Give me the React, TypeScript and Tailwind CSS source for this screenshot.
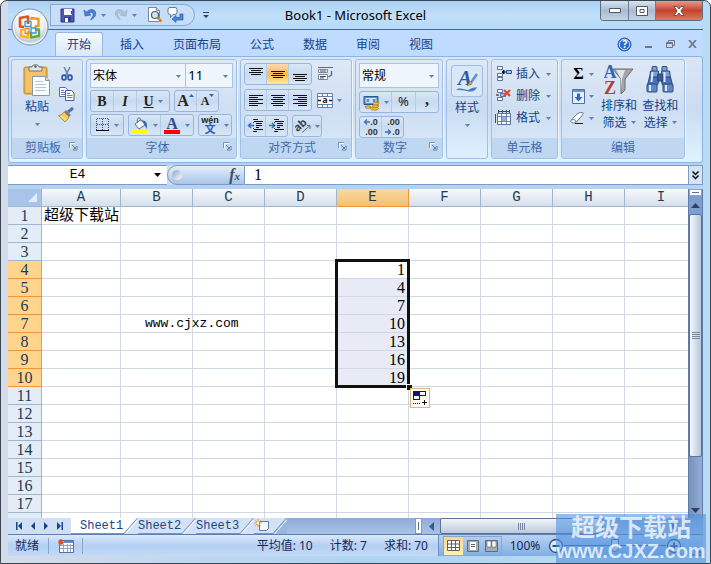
import React, { useState } from "react";
import clsx from "clsx";

const COLUMNS = ["A", "B", "C", "D", "E", "F", "G", "H", "I"];
const ROWS = Array.from({ length: 17 }, (_, i) => i + 1);
const TABS = ["开始", "插入", "页面布局", "公式", "数据", "审阅", "视图"];
const SHEETS = ["Sheet1", "Sheet2", "Sheet3"];

const CELLS: Record<string, string> = {
  A1: "超级下载站",
  B7: "www.cjxz.com",
  E4: "1",
  E5: "4",
  E6: "7",
  E7: "10",
  E8: "13",
  E9: "16",
  E10: "19",
};

const isSelectedRow = (row: number) => row >= 4 && row <= 10;

/* ---------- small shared pieces ---------- */

const Arrow = ({ className = "text-[#5a82b9]" }: { className?: string }) => (
  <svg width="5" height="3" viewBox="0 0 5 3" className={clsx("shrink-0", className)}>
    <path d="M0 0h5L2.5 3z" fill="currentColor" />
  </svg>
);

interface ToolProps {
  label: string;
  arrow?: boolean;
  className?: string;
  children: React.ReactNode;
}

const Tool = ({ label, arrow, className, children }: ToolProps) => (
  <button
    type="button"
    aria-label={label}
    className={clsx("flex items-center justify-center gap-1", className)}
  >
    {children}
    {arrow && <Arrow />}
  </button>
);

const ToolSet = ({ children }: { children: React.ReactNode }) => (
  <div className="flex h-[22px] divide-x divide-[#b4cbe8] overflow-hidden rounded-[3px] border border-[#98b6dd] bg-linear-to-b from-[#d9e6f6] via-[#c9dbf1] to-[#d8e6f7]">
    {children}
  </div>
);

const Launcher = ({ label }: { label: string }) => (
  <button type="button" aria-label={label} className="absolute top-1 right-1">
    <svg width="9" height="9" viewBox="0 0 9 9" fill="none">
      <path d="M.5 6V.5H6" stroke="#7693bb" />
      <path d="M1.5 6.5V1.5H6" stroke="#fff" />
      <path d="M3 3l4 4M8 4v4H4z" stroke="#5d7fae" fill="#fff" />
    </svg>
  </button>
);

interface GroupProps {
  title: string;
  launcher?: boolean;
  className: string;
  children: React.ReactNode;
}

const Group = ({ title, launcher, className, children }: GroupProps) => (
  <section
    aria-label={title}
    className={clsx(
      "flex shrink-0 flex-col overflow-hidden rounded-[3px] border border-[#9fbfe6] bg-linear-to-b from-[#dfe9f6] via-[#cfdff3] to-[#d9e8f8] shadow-[1px_1px_0_#eef6ff]",
      className
    )}
  >
    <div className="min-h-0 flex-1 px-[3px] pt-[3px]">{children}</div>
    <div className="relative h-5 shrink-0 bg-[#c0d7f2] text-center leading-5 text-[#3e6aaa]">
      <span className={clsx(launcher && "pr-2")}>{title}</span>
      {launcher && <Launcher label={`${title}选项`} />}
    </div>
  </section>
);

const Lines = ({ widths, top = 2 }: { widths: number[][]; top?: number }) => (
  <svg width="14" height="14" viewBox="0 0 14 14" shapeRendering="crispEdges">
    {widths.map(([x, w], i) => (
      <rect key={i} x={x} y={top + i * 2} width={w} height="1" fill="#111" />
    ))}
  </svg>
);

/* ---------- icons ---------- */

const OfficeLogo = () => (
  <svg width="38" height="38" viewBox="0 0 38 38">
    <defs>
      <radialGradient id="orb" cx="50%" cy="35%" r="65%">
        <stop offset="0" stopColor="#ffffff" />
        <stop offset="0.6" stopColor="#edf0f5" />
        <stop offset="0.85" stopColor="#c0cad9" />
        <stop offset="1" stopColor="#f5f8fc" />
      </radialGradient>
    </defs>
    <circle cx="19" cy="19" r="18" fill="url(#orb)" stroke="#7e91ac" />
    <circle cx="19" cy="19" r="16.5" fill="none" stroke="#fff" opacity=".8" />
    <g fill="none" strokeLinejoin="round">
      <path d="M17 16V8.500l-8 1.500v8.500l4 .5" stroke="#e4501a" strokeWidth="2.600" />
      <path d="M20.500 12V10l7 1v7l-4 .5" stroke="#f39a1c" strokeWidth="2.400" />
      <path d="M13 21.500l-3 .5v6l7 1.500V23" stroke="#fbb42a" strokeWidth="2.600" />
      <path d="M24 21.500h4v6.500l-8 1.500V24" stroke="#62ab35" strokeWidth="2.400" />
      <path d="M14 13.500h6v5h-6zM20 20h5v5h-5z" stroke="#3f92d2" strokeWidth="1.300" />
      <path d="M14 20.500h4v5h-4z" stroke="#ef8a1d" strokeWidth="1.300" />
    </g>
  </svg>
);

const SaveIcon = () => (
  <svg width="15" height="15" viewBox="0 0 15 15">
    <path d="M1 1h13v13H1z" fill="#5055bd" stroke="#323786" />
    <path d="M4 1h8v6H4z" fill="#f7f8ff" />
    <path d="M11 3h1v3h-1zM4 9h7v5H4z" fill="#363b86" />
    <path d="M5 10h3v4H5z" fill="#fff" />
  </svg>
);

const UndoIcon = ({ redo }: { redo?: boolean }) => (
  <svg width="14" height="14" viewBox="0 0 14 14" className={clsx(redo && "-scale-x-100")}>
    <path
      d="M1 2l1 6 6-1-2-1.500C8 3.500 11 4.500 10 7.500c-.4 1.700-1.500 3-2.500 4.500 4-2 6-5 5-8C11 .5 6.500.8 3.500 4z"
      fill={redo ? "#b3c2d6" : "#4d7fd0"}
      stroke={redo ? "#9aadc7" : "#2c5cae"}
      strokeWidth=".6"
    />
  </svg>
);

const PreviewIcon = () => (
  <svg width="16" height="16" viewBox="0 0 16 16">
    <path d="M1.500.5h8l3 3v11h-11z" fill="#fff" stroke="#7487a4" />
    <path d="M9.500.5v3h3" fill="#cfdbea" stroke="#7487a4" />
    <circle cx="8" cy="8" r="3.500" fill="#cfe5f5" stroke="#4c5c70" strokeWidth="1.200" />
    <path d="M10.500 10.500l4 4" stroke="#d58a21" strokeWidth="2.500" />
  </svg>
);

const ConvertIcon = () => (
  <svg width="17" height="16" viewBox="0 0 17 16">
    <path d="M3 .5h5q2 0 2 2v3q0 2-2 2H6l-2.500 3v-3H3q-2 0-2-2v-3q0-2 2-2z" fill="#fff" stroke="#61789b" />
    <path d="M5 12l4-3.500v2h4V7h3v6H9v2.500z" fill="#4f86d8" stroke="#295cab" strokeWidth=".7" />
  </svg>
);

const HelpIcon = () => (
  <svg width="15" height="15" viewBox="0 0 15 15">
    <circle cx="7.500" cy="7.500" r="6.500" fill="#2d6cd0" stroke="#2a57a5" />
    <circle cx="7.500" cy="7.500" r="5.200" fill="none" stroke="#d7e8ff" />
    <text x="8" y="11" textAnchor="middle" fontSize="10" fontWeight="bold" fill="#fff">?</text>
  </svg>
);

const PasteIcon = () => (
  <svg width="28" height="32" viewBox="0 0 28 32">
    <rect x="1" y="3" width="23" height="27" rx="1.500" fill="#efb651" stroke="#b98534" />
    <path d="M3 5h19v23H3z" fill="#f5c468" />
    <path d="M6 3h3c0-3 7-3 7 0h3v4H6z" fill="#dfe3ea" stroke="#6b7482" />
    <circle cx="12.500" cy="2.500" r="1.200" fill="#555f6e" />
    <path d="M9.500 12.500h13l4 4v15h-17z" fill="#fdfeff" stroke="#8696b1" />
    <path d="M22.500 12.500v4h4" fill="#d5e0ef" stroke="#8696b1" />
    <path d="M12 17.500h8M12 20.500h11M12 23.500h11M12 26.500h11" stroke="#b4c4dd" />
  </svg>
);

const CutIcon = () => (
  <svg width="12" height="14" viewBox="0 0 12 14" fill="none">
    <path d="M3 0l4.500 9M9 0L4.500 9" stroke="#6782a8" strokeWidth="1.500" />
    <ellipse cx="3" cy="10.500" rx="2" ry="2.400" stroke="#2456a8" strokeWidth="1.600" />
    <ellipse cx="9" cy="10.500" rx="2" ry="2.400" stroke="#2456a8" strokeWidth="1.600" />
  </svg>
);

const CopyIcon = () => (
  <svg width="16" height="14" viewBox="0 0 16 14" fill="#fff">
    <path d="M.5.5h6l2 2v7h-8z" stroke="#4c6ea8" />
    <path d="M2 3.500h3M2 5.500h5M2 7.500h5" stroke="#5e86c6" />
    <path d="M6.500 3.500h6l2.500 2.500v7.500H6.500z" stroke="#3c60a0" />
    <path d="M8 6.500h3M8 8.500h5.500M8 10.500h5.500" stroke="#5e86c6" />
  </svg>
);

const BrushIcon = () => (
  <svg width="17" height="16" viewBox="0 0 17 16">
    <path d="M15 1l-5 4" stroke="#5b6da6" strokeWidth="3" />
    <path d="M8 3l5 5-2 2-5-5z" fill="#7c7a9b" />
    <path d="M6 5l5 5c-1 2-3 4-4 5L.5 8.500C3 8 5 7 6 5z" fill="#f2cc63" stroke="#a98124" strokeWidth=".8" />
    <path d="M3 9l5 4" stroke="#fff2b0" />
  </svg>
);

const BorderIcon = () => (
  <svg width="14" height="14" viewBox="0 0 14 14" fill="none" shapeRendering="crispEdges">
    <path d="M.5.5h12v12M.5.5v12M6.500.5v12M.5 6.500h12" stroke="#394e73" strokeDasharray="1 1" />
    <path d="M0 12.500h13" stroke="#000" strokeWidth="1" />
  </svg>
);

const FillIcon = () => (
  <svg width="17" height="17" viewBox="0 0 17 17">
    <path d="M3 7l6-4.500 4 5.500-6 4z" fill="#f7fbff" stroke="#5a6e8b" />
    <path d="M5.500 6c-1.500-6 3.500-7 3.500-1.500" fill="none" stroke="#5a6e8b" />
    <path d="M10 3.500c4-.5 6 3 4.500 8.500-1-3-2-3.500-2-5z" fill="#3569b6" />
    <path d="M0 13h16v4H0z" fill="#ff0" />
  </svg>
);

const FontColorIcon = () => (
  <svg width="17" height="17" viewBox="0 0 17 17" className="font-['Liberation_Serif',serif]">
    <text x="8" y="12" textAnchor="middle" fontSize="16" fontWeight="bold" fill="#2c4c8e">A</text>
    <path d="M0 13h16v4H0z" fill="#f00" />
  </svg>
);

const PhoneticIcon = () => (
  <svg width="19" height="20" viewBox="0 0 19 20" className="font-['Liberation_Sans','Noto_Sans_CJK_SC',sans-serif]">
    <text x="9" y="8" textAnchor="middle" fontSize="9" fontWeight="bold" fill="#222">wén</text>
    <text x="9" y="18" textAnchor="middle" fontSize="11" fontWeight="bold" fill="#2f5cc0">文</text>
  </svg>
);

const WrapIcon = () => (
  <svg width="17" height="16" viewBox="0 0 17 16" fill="none">
    <path d="M1 1.500h15" stroke="#9a5b3a" />
    <path d="M1.500 3.500h9v3h-9zM1.500 8.500h9v5h-9z" fill="#fff" stroke="#7b8899" />
    <path d="M3 5h6M3 10.500h6M3 12h4" stroke="#3b4657" />
    <path d="M14.500 5v4l-3 2" stroke="#3c6ab4" strokeWidth="1.300" />
  </svg>
);

const MergeIcon = () => (
  <svg width="16" height="15" viewBox="0 0 16 15" fill="none">
    <path d="M.5.5h15v14H.5zM.5 3.500h15M.5 11.500h15M5.500.5v3M10.500.5v3M5.500 11.500v3M10.500 11.500v3" fill="#fff" stroke="#6480aa" />
    <path d="M1 7.500h3M12 7.500h3" stroke="#222" strokeWidth="1.500" />
    <text x="8" y="10" textAnchor="middle" fontSize="9" fontWeight="bold" fill="#222">a</text>
  </svg>
);

const IndentIcon = ({ right }: { right?: boolean }) => (
  <svg width="17" height="15" viewBox="0 0 17 15" fill="none">
    <path d="M7 .5h4M7 2.500h9M9 4.500h6M9 6.500h6M9 8.500h3M7 10.500h9M7 12.500h3" stroke="#111" shapeRendering="crispEdges" />
    <path d={right ? "M1 6.500h5M4 4l2.500 2.500L4 9" : "M7 6.500H2M4 4L1.500 6.500 4 9"} stroke="#3d70c4" strokeWidth="1.500" />
    <path d="M6.500 0v14" stroke="#333" strokeDasharray="1 2" />
  </svg>
);

const OrientIcon = () => (
  <svg width="16" height="15" viewBox="0 0 16 15" fill="none">
    <text x="2" y="12" fontSize="11" fontWeight="bold" fill="#39424e" transform="rotate(-42 4 12)">ab</text>
    <path d="M7 13.500l8-7M15 10V6.500h-3" stroke="#566d8f" />
  </svg>
);

const CurrencyIcon = () => (
  <svg width="17" height="17" viewBox="0 0 17 17">
    <path d="M1 2.500h14v8H1z" fill="#5e8ed0" stroke="#2c559c" />
    <path d="M3 4.500h10v4H3z" fill="none" stroke="#cfe2ff" />
    <circle cx="8" cy="6.500" r="2" fill="#cfe2ff" />
    <g fill="#f2be2c" stroke="#a67413" strokeWidth=".7">
      <ellipse cx="11.500" cy="14.500" rx="4" ry="1.700" />
      <ellipse cx="12.500" cy="12" rx="3" ry="1.500" />
      <ellipse cx="13" cy="9.500" rx="3" ry="1.500" />
      <ellipse cx="5" cy="13" rx="3" ry="1.300" />
    </g>
  </svg>
);

const DecimalIcon = ({ less }: { less?: boolean }) => (
  <span className="flex flex-col font-['Liberation_Sans',sans-serif] text-[9px] leading-[10px] font-bold text-[#333]">
    <span className="flex items-center justify-end">
      {!less && <svg width="7" height="6" viewBox="0 0 7 6"><path d="M7 3H2M4 .5L1.500 3 4 5.500" fill="none" stroke="#3d70c4" strokeWidth="1.300" /></svg>}
      {less ? ".00" : ".0"}
    </span>
    <span className="flex items-center justify-end">
      {less && <svg width="7" height="6" viewBox="0 0 7 6"><path d="M0 3h5M3 .5L5.500 3 3 5.500" fill="none" stroke="#3d70c4" strokeWidth="1.300" /></svg>}
      {less ? ".0" : ".00"}
    </span>
  </span>
);

const StyleIcon = () => (
  <svg width="26" height="28" viewBox="0 0 26 28" className="font-['Liberation_Serif',serif]">
    <text x="11" y="18" textAnchor="middle" fontSize="21" fontWeight="bold" fontStyle="italic" fill="#2d59a5">A</text>
    <path d="M23 7l-7 10" stroke="#6290cf" strokeWidth="2.500" />
    <path d="M17 14l-4 5 5-2z" fill="#eab13e" stroke="#a87617" strokeWidth=".6" />
    <path d="M2 23c5-4 10 2 14-1 3-2 5-1 7-2-2 5-6 5-10 4-4-1-8-1-11-1z" fill="#477bc6" />
  </svg>
);

const InsertIcon = () => (
  <svg width="18" height="16" viewBox="0 0 18 16" fill="#fff" stroke="#5673a1">
    <path d="M2.500.5h5v3h-5zM2.500 7.500h5v3h-5zM2.500 11.500h5v3h-5z" />
    <path d="M11.500 4.500h5v3h-5z" fill="#9fc1ec" stroke="#31568e" />
    <path d="M11 6H7M9 4L7 6l2 2z" fill="#111" stroke="#111" />
  </svg>
);

const DeleteIcon = () => (
  <svg width="18" height="16" viewBox="0 0 18 16" fill="#fff" stroke="#5673a1">
    <path d="M2.500 1.500h5v3h-5zM2.500 9.500h5v3h-5z" />
    <path d="M5.500 5.500h5v3h-5z" fill="#9fc1ec" />
    <path d="M4 7H1" stroke="#111" />
    <path d="M9 2l6 6M15 2L9 8" stroke="#e8442c" strokeWidth="2.200" />
  </svg>
);

const FormatIcon = () => (
  <svg width="18" height="16" viewBox="0 0 18 16" fill="none">
    <path d="M2.500 3.500h13v11h-13z" fill="#fff" stroke="#5673a1" />
    <path d="M2.500 6.500h13M2.500 11.500h13M6.500 3.500v11M11.500 3.500v11" stroke="#6885b4" />
    <path d="M7 7h4v4H7z" fill="#8ab0ea" />
    <path d="M3 1.500h12M3.500 0v3M7.500 0v3M11.500 0v3M14.500 0v3M.5 4v9" stroke="#3c4c66" />
  </svg>
);

const SigmaIcon = () => (
  <span className="w-[14px] text-center font-['Liberation_Serif',serif] text-[16px] leading-4 font-bold text-black">Σ</span>
);

const FillDownIcon = () => (
  <svg width="13" height="15" viewBox="0 0 13 15">
    <path d="M.5.5h12v14H.5z" fill="#e5f0ff" stroke="#4d6fa9" />
    <path d="M1 1h11v2H1z" fill="#7094ca" />
    <path d="M5 4.500h3V8h2.500l-4 4.500L2.500 8H5z" fill="#3267c8" />
  </svg>
);

const EraserIcon = () => (
  <svg width="15" height="13" viewBox="0 0 15 13">
    <path d="M1 8.500L7 2c1-1 3-1.500 5-1.500 1.500 0 1.500 1.500.5 2.500L6 10.500C5 11.500-.5 11 1 8.500z" fill="#fff" stroke="#62738d" />
    <path d="M1.500 8c2.500-1 4.500 0 4.500 2" fill="none" stroke="#62738d" />
    <path d="M5 11.500h8" stroke="#222" />
  </svg>
);

const SortIcon = () => (
  <svg width="30" height="32" viewBox="0 0 30 32" className="font-['Liberation_Serif',serif]">
    <text x="6" y="14" textAnchor="middle" fontSize="18" fontWeight="bold" fill="#3664b4">A</text>
    <text x="6" y="30" textAnchor="middle" fontSize="18" fontWeight="bold" fill="#b43d38">Z</text>
    <path d="M9 5h20l-8 10v11l-4 4V15z" fill="#a5a5a8" stroke="#6d6d70" />
    <path d="M12 6h9l-3 9v12l-1-12z" fill="#e5e5e7" />
  </svg>
);

const FindIcon = () => (
  <svg width="28" height="30" viewBox="0 0 28 30">
    <g stroke="#29487f" fill="#7b9fd2">
      <rect x="6" y="1.500" width="5" height="5" rx="1" />
      <rect x="16" y="1.500" width="5" height="5" rx="1" />
      <path d="M4.500 6h8v7h-9zM15.500 6h8l1 7h-9z" />
      <path d="M3.500 12h9v5l-1 3h-10zM15.500 12h9l2 8h-10l-1-3z" fill="#4b72b2" />
      <rect x="1" y="19" width="10" height="8" rx="1" fill="#5f88c5" />
      <rect x="17" y="19" width="10" height="8" rx="1" fill="#5f88c5" />
      <path d="M11.500 9h5v7h-5z" fill="#365b98" />
    </g>
    <path d="M4 20v6M20 20v6M6.500 7l-1 10M18.500 7v10" stroke="#dce9fb" strokeWidth="2" />
  </svg>
);

const MacroIcon = () => (
  <svg width="16" height="14" viewBox="0 0 16 14">
    <path d="M1.500 1.500h14v12h-14z" fill="#fff" stroke="#56719e" />
    <path d="M6 2h9v2H6z" fill="#5c8ad2" />
    <path d="M2 6.500h13M2 9.500h13M5.500 5v8M9.500 5v8M12.500 5v8" stroke="#8ba4cb" />
    <circle cx="3" cy="3" r="2.700" fill="#d9502f" />
  </svg>
);

const NewSheetIcon = () => (
  <svg width="17" height="13" viewBox="0 0 17 13">
    <path d="M5.500 2.500h9v7l-2 2h-7z" fill="#f5f9ff" stroke="#5d78a4" />
    <path d="M4 0v8M0 4h8M1.500 1.500l5 5M6.500 1.500l-5 5" stroke="#e39a2d" />
    <circle cx="4" cy="4" r="1.300" fill="#fff6c9" />
  </svg>
);

/* ---------- window chrome ---------- */

const TitleBar = () => (
  <header className="relative flex h-7 shrink-0 items-center bg-linear-to-b from-[#a9d0f3] via-[#c0dff9] to-[#b7daf8]">
    <div className="ml-[42px] flex h-[22px] items-center rounded-r-full border border-[#8ca9ce] bg-[#c6defa] pr-[10px] pl-[9px]">
      <Tool label="保存"><SaveIcon /></Tool>
      <Tool label="撤消" arrow className="ml-2"><UndoIcon /></Tool>
      <Tool label="恢复" arrow className="ml-2"><UndoIcon redo /></Tool>
      <Tool label="打印预览" className="ml-[10px]"><PreviewIcon /></Tool>
      <Tool label="简繁转换" className="ml-1"><ConvertIcon /></Tool>
    </div>
    <button type="button" aria-label="自定义快速访问工具栏" className="ml-2">
      <svg width="6" height="7" viewBox="0 0 6 7" fill="#24457c"><path d="M0 0h6v1H0zM0 3h6L3 6z" /></svg>
    </button>
    <h1 className="absolute left-1/2 -translate-x-1/2 pt-px text-[13px] whitespace-nowrap text-black">
      Book1 - Microsoft Excel
    </h1>
    <div className="ml-auto flex h-5 self-start overflow-hidden rounded-b-[4px] border border-t-0 border-[#5c6c82]">
      <button type="button" aria-label="最小化" className="grid w-7 place-items-center border-r border-[#6c7d94] bg-linear-to-b from-[#d8e4ef] via-[#a9bccf] to-[#c2d4e6]">
        <svg width="12" height="5" viewBox="0 0 12 5"><path d="M.5.5h11v4H.5z" fill="#fff" stroke="#4e5965" /></svg>
      </button>
      <button type="button" aria-label="最大化" className="grid w-[27px] place-items-center border-r border-[#6c7d94] bg-linear-to-b from-[#d8e4ef] via-[#a9bccf] to-[#c2d4e6]">
        <svg width="12" height="10" viewBox="0 0 12 10"><path d="M.5.5h11v9H.5zM4 3.500h4v3H4z" fill="#fff" stroke="#4e5965" /></svg>
      </button>
      <button type="button" aria-label="关闭" className="grid w-[46px] place-items-center bg-linear-to-b from-[#e39b8b] via-[#c5412b] to-[#d97a60]">
        <svg width="12" height="10" viewBox="0 0 12 10"><path d="M1 .5h3l2 2.500L8 .5h3L7.800 5 11 9.500H8L6 7 4 9.500H1L4.200 5z" fill="#fff" stroke="#5a3a3a" strokeWidth=".8" /></svg>
      </button>
    </div>
    <button type="button" aria-label="Office 按钮" className="absolute top-[7px] left-[3px] z-10">
      <OfficeLogo />
    </button>
  </header>
);

const TabStrip = () => {
  const [active, setActive] = useState("开始");

  return (
    <nav className="flex h-[27px] shrink-0 items-end border-t border-[#48688f] bg-[#bfdbff] pr-1 pl-[47px] text-[#15428b]">
      <div role="tablist" className="flex h-6 gap-[5px]">
        {TABS.map((tab) => (
          <button
            key={tab}
            type="button"
            role="tab"
            aria-selected={tab === active}
            onClick={() => setActive(tab)}
            className={clsx(
              "rounded-t-[3px] border border-b-0 px-[11px]",
              tab === active ? "border-[#96b7e2] bg-linear-to-b from-[#f3f9ff] to-[#dce8f7]" : "border-transparent"
            )}
          >
            {tab}
          </button>
        ))}
      </div>
      <div className="ml-auto flex h-6 items-center gap-[13px] pr-[2px] text-[#707783]">
        <Tool label="帮助"><HelpIcon /></Tool>
        <Tool label="最小化工作簿"><svg width="8" height="8" viewBox="0 0 8 8"><path d="M0 6h7v2H0z" fill="currentColor" /></svg></Tool>
        <Tool label="还原工作簿"><svg width="9" height="8" viewBox="0 0 9 8" fill="none" stroke="currentColor"><path d="M2.500 2V.5h6v5H7M.5 2.500h6v5h-6zM.5 3.500h6" /></svg></Tool>
        <Tool label="关闭工作簿"><svg width="9" height="8" viewBox="0 0 9 8"><path d="M1 0l7 8M8 0L1 8" stroke="currentColor" strokeWidth="1.800" /></svg></Tool>
      </div>
    </nav>
  );
};

/* ---------- ribbon ---------- */

interface ComboProps {
  label: string;
  options: string[];
  className: string;
}

const Combo = ({ label, options, className }: ComboProps) => (
  <div className={clsx("relative h-[25px] border border-[#a9c3e6] bg-[#eef5fd]", className)}>
    <select aria-label={label} className="size-full appearance-none pl-[2px] text-black outline-none">
      {options.map((option) => (
        <option key={option}>{option}</option>
      ))}
    </select>
    <span className="pointer-events-none absolute top-[11px] right-1"><Arrow /></span>
  </div>
);

const BigButton = ({ icon, lines, className }: { icon: React.ReactNode; lines: string[]; className?: string }) => (
  <button type="button" className={clsx("flex flex-col items-center text-[#15428b]", className)}>
    <span className="grid h-[34px] place-items-center">{icon}</span>
    {lines.map((line, i) => (
      <span key={line} className="flex items-center gap-1 leading-[17px]">
        {line}
        {i === 1 && <Arrow />}
      </span>
    ))}
    {lines.length === 1 && <span className="grid h-[17px] place-items-center"><Arrow /></span>}
  </button>
);

const CellCommand = ({ icon, label }: { icon: React.ReactNode; label: string }) => (
  <button type="button" className="flex h-[22px] items-center text-[#15428b]">
    <span className="shrink-0">{icon}</span>
    <span className="mr-[6px] ml-[3px] whitespace-nowrap">{label}</span>
    <Arrow />
  </button>
);

const Ribbon = () => (
  <div className="flex h-[107px] shrink-0 gap-[3px] overflow-hidden rounded-[3px] border border-[#8db2e3] bg-linear-to-b from-[#dbe6f4] via-[#cbdcf2] to-[#dff3ff] px-[2px] pt-[2px] pb-[3px]">
    <Group title="剪贴板" launcher className="w-[72px]">
      <div className="flex justify-between pr-1 pl-2">
        <BigButton icon={<PasteIcon />} lines={["粘贴"]} className="gap-px" />
        <div className="flex flex-col items-center gap-[6px] pt-1">
          <Tool label="剪切"><CutIcon /></Tool>
          <Tool label="复制"><CopyIcon /></Tool>
          <Tool label="格式刷"><BrushIcon /></Tool>
        </div>
      </div>
    </Group>

    <Group title="字体" launcher className="w-[151px]">
      <div className="flex flex-col gap-[2px]">
        <div className="flex">
          <Combo label="字体" options={["宋体", "黑体"]} className="w-[97px]" />
          <Combo label="字号" options={["11", "12"]} className="w-[47px] border-l-0 text-[13px]" />
        </div>
        <div className="flex gap-1 font-['Liberation_Serif',serif] text-[14px] text-[#222]">
          <ToolSet>
            <Tool label="加粗" className="w-[23px] font-bold">B</Tool>
            <Tool label="倾斜" className="w-[23px] font-bold italic">I</Tool>
            <Tool label="下划线" arrow className="w-8 font-bold"><span className="underline">U</span></Tool>
          </ToolSet>
          <ToolSet>
            <Tool label="增大字号" className="w-[22px]"><span className="-mr-1 text-[16px] font-bold">A</span><svg width="5" height="3" viewBox="0 0 5 3" className="mb-3"><path d="M0 3h5L2.500 0z" fill="#3566b4" /></svg></Tool>
            <Tool label="减小字号" className="w-[21px]"><span className="-mr-1 text-[12px] font-bold">A</span><span className="mb-3"><Arrow className="text-[#3566b4]" /></span></Tool>
          </ToolSet>
        </div>
        <div className="flex gap-1">
          <ToolSet><Tool label="边框" arrow className="w-8"><BorderIcon /></Tool></ToolSet>
          <ToolSet>
            <Tool label="填充颜色" arrow className="w-8"><FillIcon /></Tool>
            <Tool label="字体颜色" arrow className="w-8"><FontColorIcon /></Tool>
          </ToolSet>
          <ToolSet><Tool label="拼音" arrow className="w-8"><PhoneticIcon /></Tool></ToolSet>
        </div>
      </div>
    </Group>

    <Group title="对齐方式" launcher className="w-[112px]">
      <div className="flex flex-col gap-1">
        <div className="flex gap-[5px]">
          <ToolSet>
            <Tool label="顶端对齐" className="w-[22px]"><Lines top={1} widths={[[0, 14], [2, 10], [0, 14], [2, 10]]} /></Tool>
            <Tool label="垂直居中" className="w-[22px] bg-linear-to-b from-[#fbdcae] via-[#ffb64e] to-[#ffe99a]"><Lines top={4} widths={[[0, 14], [2, 10], [0, 14], [2, 10]]} /></Tool>
            <Tool label="底端对齐" className="w-[22px]"><Lines top={7} widths={[[0, 14], [2, 10], [0, 14], [2, 10]]} /></Tool>
          </ToolSet>
          <Tool label="自动换行"><WrapIcon /></Tool>
        </div>
        <div className="flex gap-[5px]">
          <ToolSet>
            <Tool label="文本左对齐" className="w-[22px]"><Lines widths={[[0, 14], [0, 9], [0, 14], [0, 9], [0, 14], [0, 9]]} /></Tool>
            <Tool label="居中" className="w-[22px]"><Lines widths={[[0, 14], [2, 10], [0, 14], [2, 10], [0, 14], [2, 10]]} /></Tool>
            <Tool label="文本右对齐" className="w-[22px]"><Lines widths={[[0, 14], [5, 9], [0, 14], [5, 9], [0, 14], [5, 9]]} /></Tool>
          </ToolSet>
          <Tool label="合并后居中" arrow><MergeIcon /></Tool>
        </div>
        <div className="flex gap-1">
          <ToolSet>
            <Tool label="减少缩进量" className="w-[21px]"><IndentIcon /></Tool>
            <Tool label="增加缩进量" className="w-[21px]"><IndentIcon right /></Tool>
          </ToolSet>
          <ToolSet><Tool label="方向" arrow className="w-7"><OrientIcon /></Tool></ToolSet>
        </div>
      </div>
    </Group>

    <Group title="数字" launcher className="w-[88px]">
      <div className="flex flex-col items-start gap-[3px]">
        <Combo label="数字格式" options={["常规", "数值"]} className="w-20" />
        <ToolSet>
          <Tool label="会计数字格式" arrow className="w-8"><CurrencyIcon /></Tool>
          <Tool label="百分比样式" className="w-6 text-[13px] text-[#222]">%</Tool>
          <Tool label="千位分隔样式" className="w-[22px] pb-1 font-['Liberation_Serif',serif] text-[16px] leading-4 font-bold text-[#222]">,</Tool>
        </ToolSet>
        <ToolSet>
          <Tool label="增加小数位数" className="w-[22px]"><DecimalIcon /></Tool>
          <Tool label="减少小数位数" className="w-[21px]"><DecimalIcon less /></Tool>
        </ToolSet>
      </div>
    </Group>

    <section aria-label="样式" className="flex w-[42px] shrink-0 justify-center rounded-[3px] border border-[#9fbfe6] bg-linear-to-b from-[#dfe9f6] via-[#cadcf2] to-[#dff0fd] pt-1">
      <BigButton
        icon={<span className="grid size-8 place-items-center rounded-[3px] border border-[#9fbce2] bg-[#d9e7f8]"><StyleIcon /></span>}
        lines={["样式"]}
        className="gap-px"
      />
    </section>

    <Group title="单元格" className="w-[67px]">
      <div className="flex flex-col">
        <CellCommand icon={<InsertIcon />} label="插入" />
        <CellCommand icon={<DeleteIcon />} label="删除" />
        <CellCommand icon={<FormatIcon />} label="格式" />
      </div>
    </Group>

    <Group title="编辑" className="w-[124px]">
      <div className="flex">
        <div className="flex w-[34px] flex-col items-end pr-1">
          <Tool label="求和" arrow className="h-[22px]"><SigmaIcon /></Tool>
          <Tool label="填充" arrow className="h-[22px]"><FillDownIcon /></Tool>
          <Tool label="清除" arrow className="h-[22px]"><EraserIcon /></Tool>
        </div>
        <BigButton icon={<SortIcon />} lines={["排序和", "筛选"]} className="w-[42px]" />
        <BigButton icon={<FindIcon />} lines={["查找和", "选择"]} className="w-[42px]" />
      </div>
    </Group>
  </div>
);

/* ---------- formula bar and grid ---------- */

const FormulaBar = () => (
  <div className="flex h-[26px] shrink-0 border-t-2 border-b-4 border-[#b6d2f3] bg-[#c7dcf6]">
    <div className="flex w-[159px] items-center border-y border-[#7e9cc2] bg-white">
      <input
        aria-label="名称框"
        defaultValue="E4"
        className="w-[139px] text-center font-['Liberation_Mono',monospace] text-[13px] outline-none"
      />
      <button type="button" aria-label="名称列表" className="ml-[7px]">
        <svg width="7" height="4" viewBox="0 0 7 4"><path d="M0 0h7L3.500 4z" /></svg>
      </button>
    </div>
    <div className="flex w-[78px] items-center justify-between rounded-l-full border border-[#7e9cc2] bg-linear-to-b from-[#e5effb] to-[#a9c4e7] pr-1 pl-1">
      <span className="size-[10px] rounded-full bg-linear-to-br from-[#8ea5c4] to-white" />
      <button type="button" aria-label="插入函数" className="font-['Liberation_Serif',serif] text-[16px] leading-4 font-bold text-[#3c4d69] italic">
        f<span className="text-[11px]">x</span>
      </button>
    </div>
    <input
      aria-label="编辑栏"
      defaultValue="1"
      className="min-w-0 flex-1 border-y border-[#7e9cc2] bg-white pl-[9px] font-['Liberation_Serif',serif] text-[16px] outline-none"
    />
    <button type="button" aria-label="展开编辑栏" className="grid w-[15px] place-items-center border border-[#7e9cc2] bg-[#d4e4f8]">
      <svg width="7" height="9" viewBox="0 0 7 9" fill="none" stroke="#000" strokeWidth="1.500"><path d="M.5.5l3 3 3-3M.5 4.500l3 3 3-3" /></svg>
    </button>
  </div>
);

const PasteOptions = () => (
  <button type="button" aria-label="自动填充选项" className="absolute top-[127px] left-[73px] z-10 grid size-5 place-items-center border border-[#dfb875] bg-[#fffdf6]">
    <svg width="14" height="14" viewBox="0 0 14 14" shapeRendering="crispEdges">
      <path d="M.5.5h12v4H.5zM.5 4.500h6v4h-6z" fill="#fff" stroke="#111180" />
      <path d="M0 0h7v5H0z" fill="#111180" />
      <path d="M0 12.500h8" stroke="#111" strokeDasharray="1 1" />
      <path d="M9 11.500h5M11.500 9v5" stroke="#111" />
    </svg>
  </button>
);

const SheetTable = () => (
  <table className="w-full min-w-[689px] table-fixed border-separate border-spacing-0 font-['Liberation_Serif','Noto_Sans_CJK_SC',serif] text-[16px] leading-[17px]">
    <colgroup>
      <col className="w-[34px]" />
      <col className="w-[79px]" />
      {COLUMNS.slice(1, 8).map((col) => (
        <col key={col} className="w-[72px]" />
      ))}
      <col />
    </colgroup>
    <thead>
      <tr className="h-[18px]">
        <th className="border-r border-b border-[#9eb6ce] bg-[#a9c4e9] p-0">
          <svg width="9" height="9" viewBox="0 0 9 9" className="mr-1 ml-auto"><path d="M9 0v9H0z" fill="#e3edf9" /></svg>
        </th>
        {COLUMNS.map((col) => (
          <th
            key={col}
            scope="col"
            className={clsx(
              "border-r border-b p-0 font-['Liberation_Mono',monospace] text-[14px] font-normal text-[#1f3b50]",
              col === "I" && "border-r-0",
              col === "E" ? "border-[#f29536] bg-linear-to-b from-[#f9d99f] to-[#f2c172]" : "border-[#9eb6ce] bg-linear-to-b from-[#f7fafd] to-[#d6dfea]"
            )}
          >
            {col}
          </th>
        ))}
      </tr>
    </thead>
    <tbody>
      {ROWS.map((row) => (
        <tr key={row} className="h-[18px]">
          <th
            scope="row"
            className={clsx(
              "border-r border-b p-0 font-normal text-[#1f3b50]",
              isSelectedRow(row) ? "border-[#f29536] bg-[#ffd58d]" : "border-[#9eb6ce] bg-[#e4ecf7]"
            )}
          >
            {row}
          </th>
          {COLUMNS.map((col) => {
            const id = `${col}${row}`;
            return (
              <td
                key={id}
                className={clsx(
                  "border-r border-b border-[#d0d7e5] p-0 whitespace-nowrap",
                  id === "A1" && "pl-[2px] text-[15px]",
                  id === "B7" && "pl-6 font-['Liberation_Mono',monospace] text-[13px]",
                  id === "E4" && "relative",
                  col === "I" && "border-r-0",
                  col === "E" && isSelectedRow(row) && "pr-[3px] text-right",
                  col === "E" && isSelectedRow(row) && row > 4 && "bg-[#e8ebf6]"
                )}
              >
                {CELLS[id]}
                {id === "E4" && (
                  <>
                    <span className="pointer-events-none absolute -top-[2px] -left-[2px] h-[129px] w-[75px] border-[3px] border-[#111]" />
                    <span className="pointer-events-none absolute top-[123px] left-[69px] size-[6px] border-t border-l border-white bg-[#111]" />
                    <PasteOptions />
                  </>
                )}
              </td>
            );
          })}
        </tr>
      ))}
      {/* tail row, only its top shows above the sheet tabs */}
      <tr className="h-[18px]">
        <td className="border-r border-[#9eb6ce] bg-[#e4ecf7] p-0" />
        {COLUMNS.map((col) => (
          <td key={col} className={clsx("border-r border-[#d0d7e5] p-0", col === "I" && "border-r-0")} />
        ))}
      </tr>
    </tbody>
  </table>
);

const VerticalScroll = () => (
  <div className="flex w-[15px] shrink-0 flex-col border-x border-[#5f7ba8] bg-linear-to-r from-[#7591bd] to-[#93aed5]">
    <div className="grid h-[7px] place-items-center border border-[#8aa3c6] bg-white"><span className="h-px w-[7px] bg-[#5b7398]" /></div>
    <button type="button" aria-label="向上滚动" className="grid h-[18px] place-items-center bg-[#7c9ed0]">
      <svg width="9" height="5" viewBox="0 0 9 5"><path d="M0 5h9L4.500 0z" fill="#363d5c" /></svg>
    </button>
    <div className="mb-[45px] grid flex-1 place-items-center rounded-[2px] border border-[#5c7296] bg-linear-to-r from-[#f4f7fb] via-[#d5dfeb] to-[#b7c6da]">
      <svg width="8" height="8" viewBox="0 0 8 8"><path d="M0 .5h8M0 2.500h8M0 4.500h8M0 6.500h8" stroke="#7588a6" /></svg>
    </div>
    <button type="button" aria-label="向下滚动" className="grid h-4 place-items-center">
      <svg width="9" height="5" viewBox="0 0 9 5"><path d="M0 0h9L4.500 5z" fill="#363d5c" /></svg>
    </button>
  </div>
);

/* ---------- bottom bars ---------- */

const NAV_PATHS = [
  { label: "第一张", d: "M0 0h1.500v8H0zM6 0v8L2 4z" },
  { label: "上一张", d: "M5 0v8L1 4z" },
  { label: "下一张", d: "M1 0v8l4-4z" },
  { label: "最后一张", d: "M0 0v8l4-4zM4.500 0H6v8H4.500z" },
];

const Slant = ({ left, right }: { left: string; right: string }) => (
  <svg width="14" height="16" viewBox="0 0 14 16" className="shrink-0">
    <path d="M0 0h14L0 16z" fill={left} />
    <path d="M14 0v16H0z" fill={right} />
    <path d="M0 15.500L13.500 0" stroke="#7795c0" />
    <path d="M1.500 16L14 1.500" stroke="#fff" />
  </svg>
);

const SheetBar = () => (
  <div className="flex h-4 shrink-0 bg-linear-to-b from-[#8fadd8] to-[#a8c2e6]">
    <div className="flex w-[63px] items-center justify-around bg-[#cfe0f6] px-1 text-[#1c4587]">
      {NAV_PATHS.map(({ label, d }) => (
        <Tool key={label} label={label}>
          <svg width="6" height="8" viewBox="0 0 6 8" fill="currentColor"><path d={d} /></svg>
        </Tool>
      ))}
    </div>
    <div role="tablist" className="flex border-b border-[#7795c0] font-['Liberation_Mono',monospace] text-[12px] text-[#1c4587]">
      {SHEETS.map((sheet, i) => (
        <React.Fragment key={sheet}>
          <button
            type="button"
            role="tab"
            aria-selected={i === 0}
            className={clsx("text-left leading-4 whitespace-nowrap", i === 0 ? "w-[53px] bg-white pl-[9px]" : "w-11 bg-[#d3e2f6]")}
          >
            {sheet}
          </button>
          <Slant left={i === 0 ? "#ffffff" : "#d3e2f6"} right="#d3e2f6" />
        </React.Fragment>
      ))}
      <button type="button" aria-label="插入工作表" className="flex w-[19px] items-center bg-[#d3e2f6]">
        <NewSheetIcon />
      </button>
      <Slant left="#d3e2f6" right="#9ab6de" />
    </div>
    <div className="ml-auto flex w-[288px] items-stretch">
      <span className="grid w-[7px] place-items-center border border-[#7e9cc2] bg-white"><span className="h-2 w-px bg-[#5b7398]" /></span>
      <button type="button" aria-label="向左滚动" className="grid w-[18px] place-items-center">
        <svg width="5" height="9" viewBox="0 0 5 9"><path d="M5 0v9L0 4.500z" fill="#3d5688" /></svg>
      </button>
      <div className="grid w-[163px] place-items-center rounded-[2px] border border-[#5c7296] bg-linear-to-b from-[#f2f5f9] to-[#bccadd]">
        <svg width="8" height="7" viewBox="0 0 8 7"><path d="M.5 0v7M2.500 0v7M4.500 0v7M6.500 0v7" stroke="#7588a6" /></svg>
      </div>
      <button type="button" aria-label="向右滚动" className="ml-auto grid w-[18px] place-items-center">
        <svg width="5" height="9" viewBox="0 0 5 9"><path d="M0 0v9l5-4.500z" fill="#3d5688" /></svg>
      </button>
      <span className="w-[21px]" />
    </div>
  </div>
);

const ZoomButton = ({ label, plus }: { label: string; plus?: boolean }) => (
  <button type="button" aria-label={label} className="shrink-0">
    <svg width="16" height="16" viewBox="0 0 16 16" fill="none">
      <circle cx="8" cy="8" r="6.500" fill="#d9e9fb" stroke="#2c4a7c" strokeWidth="1.300" />
      <path d={plus ? "M4.500 8h7M8 4.500v7" : "M4.500 8h7"} stroke="#2c4a7c" strokeWidth="2" />
    </svg>
  </button>
);

const StatusBar = () => (
  <footer className="flex h-[22px] shrink-0 items-center border-t border-[#5d7eb0] bg-linear-to-b from-[#dbe9fb] via-[#b5d0f3] to-[#c3daf6] text-[#15285a]">
    <span className="w-10 pl-[7px]">就绪</span>
    <span className="h-4 w-px bg-[#86a5d1]" />
    <Tool label="录制宏" className="w-[33px]"><MacroIcon /></Tool>
    <span className="h-4 w-px bg-[#86a5d1]" />
    <div className="ml-auto flex gap-[17px] pr-[10px] whitespace-nowrap">
      <span>平均值: 10</span>
      <span>计数: 7</span>
      <span>求和: 70</span>
    </div>
    <div className="flex h-full w-[265px] shrink-0 items-center border-l border-[#6b8cbd] bg-linear-to-b from-[#b9d2f3] to-[#82aee4] pl-1">
      <div className="flex border border-[#86a5d1]">
        <button type="button" aria-label="普通" className="grid h-[18px] w-[19px] place-items-center bg-linear-to-b from-[#f8d68d] to-[#fff1b4]">
          <svg width="13" height="11" viewBox="0 0 13 11"><path d="M.5.5h12v10H.5zM.5 4h12M.5 7.500h12M4.500.5v10M8.500.5v10" fill="#fff" stroke="#66614e" /></svg>
        </button>
        <button type="button" aria-label="页面布局" className="grid h-[18px] w-[19px] place-items-center">
          <svg width="12" height="12" viewBox="0 0 12 12"><path d="M.5.5h11v11H.5z" fill="#a8a9ab" stroke="#626b7a" /><path d="M3 2h6v8H3z" fill="#fff" /><path d="M4 4.500h4M4 6.500h4" stroke="#626b7a" /></svg>
        </button>
        <button type="button" aria-label="分页预览" className="grid h-[18px] w-[19px] place-items-center">
          <svg width="13" height="12" viewBox="0 0 13 12"><path d="M.5.5h12v11H.5z" fill="#a8a9ab" stroke="#626b7a" /><path d="M2 1h4v6H2zM7 1h4v6H7z" fill="#fff" stroke="#626b7a" strokeWidth=".7" /></svg>
        </button>
      </div>
      <span className="w-[46px] text-center">100%</span>
      <ZoomButton label="缩小" />
      <input
        type="range"
        aria-label="显示比例"
        defaultValue={50}
        className="h-4 w-[102px] appearance-none bg-[linear-gradient(#3f5f90,#3f5f90)] bg-[length:100%_1px] bg-center bg-no-repeat [&::-webkit-slider-thumb]:h-[13px] [&::-webkit-slider-thumb]:w-2 [&::-webkit-slider-thumb]:appearance-none [&::-webkit-slider-thumb]:rounded-b-full [&::-webkit-slider-thumb]:border [&::-webkit-slider-thumb]:border-[#3f5f90] [&::-webkit-slider-thumb]:bg-[#dcebfb]"
      />
      <ZoomButton label="放大" plus />
      <svg width="9" height="9" viewBox="0 0 9 9" className="mr-[2px] ml-auto self-end" fill="#3a5a92">
        <path d="M7 0h2v2H7zM3 4h2v2H3zM7 4h2v2H7zM0 7h2v2H0zM3 7h2v2H3zM7 7h2v2H7z" />
      </svg>
    </div>
  </footer>
);

const Watermark = () => (
  <div className="pointer-events-none absolute right-1 bottom-0 flex h-[49px] w-[150px] flex-col items-center bg-[#4f91df]/60 font-bold whitespace-nowrap text-white/75">
    <span className="text-[24px] leading-[26px]">超级下载站</span>
    <span className="font-['Liberation_Sans',sans-serif] text-[20px] leading-[23px]">www.CJXZ.com</span>
  </div>
);

export default function App() {
  return (
    <div className="relative flex h-screen w-full flex-col overflow-hidden rounded-t-[7px] border border-[#3b4653] bg-linear-to-r from-[#d5dce9] via-[#aed4f2] to-[#b9dcf5] px-[7px] pb-[7px] font-['Noto_Sans','Noto_Sans_CJK_SC',sans-serif] text-[12px]">
      <TitleBar />
      <TabStrip />
      <Ribbon />
      <FormulaBar />
      <main className="flex min-h-0 flex-1 bg-white">
        <div className="min-w-0 flex-1 overflow-hidden">
          <SheetTable />
        </div>
        <VerticalScroll />
      </main>
      <SheetBar />
      <StatusBar />
      <Watermark />
    </div>
  );
}
